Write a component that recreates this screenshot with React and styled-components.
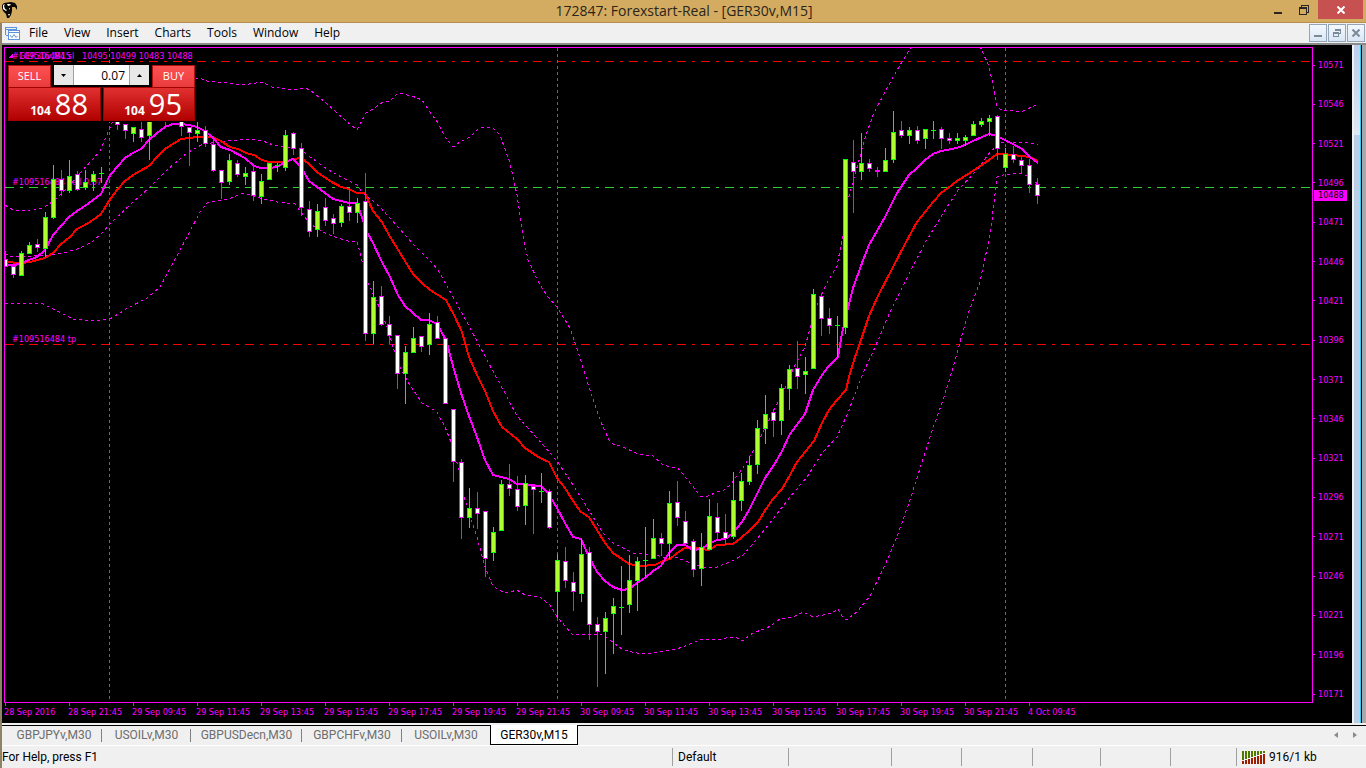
import React, { useState } from 'react';
import styled, { createGlobalStyle } from 'styled-components';

const MAGENTA = '#ff00ff';

// [x, body top, body bottom, high, low, rising]
const candles = [
  [5, 259, 267, 251, 267, 0], [13, 266, 275, 266, 278, 0], [21, 253, 276, 251, 276, 1], [29, 245, 254, 242, 254, 1],
  [37, 244, 248, 239, 252, 0], [45, 217, 249, 212, 257, 1], [53, 179, 218, 165, 219, 1], [61, 179, 191, 170, 196, 0],
  [69, 176, 191, 160, 193, 1], [77, 174, 190, 171, 191, 0], [85, 182, 188, 170, 190, 1], [93, 174, 182, 171, 191, 1],
  [101, 173, 174, 167, 183, 1], [117, 115, 125, 110, 130, 0], [125, 124, 131, 124, 139, 0], [133, 127, 134, 127, 142, 1],
  [141, 129, 138, 120, 142, 0], [149, 110, 136, 110, 160, 1], [165, 112, 121, 110, 127, 0], [181, 120, 127, 115, 136, 0],
  [189, 127, 133, 127, 166, 0], [197, 130, 134, 122, 142, 1], [205, 130, 144, 126, 147, 0], [213, 144, 171, 136, 172, 0],
  [221, 170, 183, 170, 199, 0], [229, 160, 182, 154, 185, 1], [237, 163, 175, 160, 177, 0], [245, 173, 177, 167, 185, 1],
  [253, 171, 196, 165, 201, 0], [261, 181, 197, 174, 204, 1], [269, 163, 180, 163, 180, 1], [277, 165, 166, 163, 172, 1],
  [285, 135, 168, 130, 171, 1], [293, 133, 149, 132, 155, 0], [301, 148, 208, 143, 216, 0], [309, 209, 232, 201, 237, 0],
  [317, 211, 230, 204, 237, 1], [325, 207, 221, 198, 226, 0], [333, 218, 224, 214, 234, 0], [341, 206, 223, 204, 227, 1],
  [349, 206, 213, 189, 221, 0], [357, 203, 213, 198, 223, 1], [365, 201, 334, 173, 341, 0], [373, 297, 334, 281, 344, 1],
  [381, 296, 325, 286, 326, 0], [389, 324, 336, 316, 344, 0], [397, 335, 374, 335, 389, 0], [405, 352, 374, 346, 404, 1],
  [413, 338, 353, 327, 353, 1], [421, 336, 347, 336, 352, 0], [429, 324, 345, 313, 355, 1], [437, 322, 339, 316, 339, 0],
  [445, 338, 404, 338, 404, 0], [453, 409, 462, 409, 482, 0], [461, 462, 518, 459, 539, 0], [469, 508, 518, 488, 528, 1],
  [477, 508, 514, 492, 529, 0], [485, 511, 559, 511, 577, 0], [493, 532, 553, 527, 561, 1], [501, 484, 531, 480, 531, 1],
  [509, 484, 489, 464, 496, 0], [517, 489, 507, 476, 511, 0], [525, 483, 506, 475, 525, 1], [533, 486, 490, 486, 534, 0],
  [541, 491, 492, 473, 503, 1], [549, 491, 528, 489, 529, 0], [557, 560, 592, 554, 618, 1], [565, 561, 581, 547, 588, 0],
  [573, 582, 592, 572, 611, 0], [581, 554, 594, 539, 602, 1], [589, 552, 625, 547, 640, 0], [597, 624, 632, 617, 687, 0],
  [605, 618, 632, 612, 674, 1], [613, 606, 614, 598, 654, 1], [621, 607, 608, 566, 635, 1], [629, 580, 605, 555, 613, 1],
  [637, 561, 581, 557, 611, 1], [645, 560, 561, 527, 577, 1], [653, 538, 559, 519, 559, 1], [661, 538, 544, 533, 556, 0],
  [669, 503, 544, 491, 559, 1], [677, 502, 518, 481, 526, 0], [685, 521, 544, 511, 544, 0], [693, 541, 570, 539, 577, 0],
  [701, 547, 569, 533, 586, 1], [709, 516, 550, 499, 550, 1], [717, 517, 533, 503, 540, 0], [725, 532, 539, 514, 545, 0],
  [733, 500, 537, 472, 539, 1], [741, 481, 501, 473, 511, 1], [749, 465, 482, 456, 485, 1], [757, 428, 465, 420, 474, 1],
  [765, 414, 429, 395, 444, 1], [773, 412, 421, 409, 437, 0], [781, 388, 421, 384, 435, 1], [789, 369, 389, 365, 410, 1],
  [797, 368, 377, 341, 389, 0], [805, 371, 375, 357, 394, 1], [813, 294, 369, 289, 369, 1], [821, 296, 319, 293, 336, 0],
  [829, 318, 326, 308, 334, 0], [837, 325, 326, 316, 357, 1], [845, 159, 328, 159, 334, 1], [853, 162, 172, 140, 213, 0],
  [861, 163, 172, 133, 180, 1], [869, 163, 169, 159, 172, 0], [877, 170, 172, 167, 177, 0], [885, 160, 172, 148, 172, 1],
  [893, 132, 160, 111, 163, 1], [901, 130, 136, 121, 138, 0], [909, 130, 136, 127, 144, 1], [917, 130, 141, 126, 144, 0],
  [925, 129, 139, 129, 149, 1], [933, 130, 131, 121, 139, 1], [941, 129, 139, 127, 149, 0], [949, 138, 141, 133, 144, 0],
  [957, 138, 141, 133, 144, 1], [965, 137, 141, 135, 146, 1], [973, 124, 136, 121, 136, 1], [981, 121, 125, 118, 127, 1],
  [989, 118, 122, 115, 136, 1], [997, 116, 149, 115, 160, 0], [1005, 154, 168, 148, 172, 1], [1013, 154, 160, 146, 163, 0],
  [1021, 160, 166, 157, 174, 0], [1029, 165, 185, 159, 193, 0], [1037, 184, 196, 178, 204, 0],
];

const fastMa = '5,263 8,265 15,265 21,263 37,257 45,250 53,235 61,226 69,217 77,211 85,206 93,200 101,194 109,177 117,167 125,158 133,153 141,149 149,140 157,133 165,127 173,124 181,124 189,125 197,127 205,131 213,138 221,147 230,150 245,158 254,166 261,168 269,168 277,167 285,162 293,159 301,167 309,181 317,187 325,193 333,199 349,203 357,203 360,212 367,232 373,243 381,260 390,277 398,295 405,306 413,313 421,320 429,320 437,324 446,340 453,366 461,393 469,416 477,437 485,460 493,475 509,479 517,484 541,486 548,493 557,508 565,523 573,537 581,539 589,557 597,572 605,581 613,587 622,590 629,589 637,583 645,578 653,571 661,566 669,553 677,545 685,545 693,550 701,549 709,544 717,540 725,539 733,533 742,522 749,510 757,494 765,478 774,465 782,451 790,434 805,414 813,390 822,375 828,367 838,357 842,333 848,308 853,288 862,263 869,245 885,217 897,193 909,175 917,168 925,160 933,154 941,151 957,148 965,145 973,141 982,137 989,134 997,136 1013,144 1022,149 1030,157 1038,163';
const slowMa = '5,262 21,263 30,262 45,258 53,253 61,244 70,237 77,229 85,225 93,220 101,214 109,201 117,190 125,181 133,175 149,166 157,157 165,149 181,139 197,137 213,137 221,141 230,147 238,149 246,153 254,155 262,160 269,162 285,162 293,159 301,158 309,164 317,172 330,181 341,187 349,189 357,193 365,193 373,211 382,222 389,235 397,248 405,261 413,274 422,283 430,290 446,300 454,315 462,332 469,357 477,375 485,391 493,411 502,427 517,439 525,448 540,458 549,462 557,478 565,488 573,501 581,512 589,517 597,530 605,543 613,553 622,559 629,564 640,566 655,565 663,561 670,559 677,553 685,548 693,547 701,549 709,550 717,545 733,544 741,538 749,531 758,522 766,509 773,499 782,489 790,475 797,462 814,441 822,423 829,410 837,400 846,390 849,377 854,360 862,337 869,316 877,298 893,267 905,244 917,222 925,212 933,202 941,193 948,188 957,181 973,171 989,160 997,154 1003,154 1013,155 1030,157 1038,161';
const bands = [
  '5,205 13,210 30,210 43,208 55,200 67,188 82,171 100,151 106,137 112,123 125,95 140,80 200,78 207,81 227,83 243,85 262,82 272,87 292,90 305,88 310,90 325,102 338,114 357,130 366,113 373,109 383,102 390,101 398,93 412,96 422,100 430,112 438,123 445,137 453,147 460,142 470,137 480,127 493,128 500,135 510,163 517,195 523,235 528,260 540,285 548,297 557,307 570,328 580,358 590,390 600,420 609,440 613,444 623,447 638,454 653,456 662,464 670,467 677,467 687,479 695,489 700,496 708,496 717,492 724,490 730,485 743,468 755,448 760,438 773,412 785,388 795,365 805,347 811,325 816,307 827,283 837,266 842,240 848,200 852,185 860,157 865,138 873,115 887,88 900,65 912,46',
  '980,46 982,51 989,66 993,85 997,107 1002,110 1013,111 1023,111 1038,104',
  '5,254 13,257 50,255 67,252 80,248 92,242 103,232 112,222 133,202 150,187 167,170 187,153 203,144 227,141 247,139 263,141 273,145 293,148 302,151 327,169 343,178 357,185 363,193 380,207 397,226 413,244 430,261 438,270 452,295 470,328 487,360 507,397 517,416 537,438 557,461 573,485 590,512 603,533 613,543 633,553 655,555 663,557 678,558 690,563 703,567 717,567 730,562 743,555 757,539 773,519 790,497 807,477 822,453 837,437 847,415 863,373 873,352 890,312 910,272 925,243 942,215 958,190 977,170 990,152 1000,143 1007,142 1025,142 1038,145',
  '5,303 43,304 57,311 73,319 90,321 110,319 128,308 147,298 160,287 173,263 187,237 200,212 207,203 228,199 244,193 260,198 277,202 295,204 303,215 312,225 323,232 337,238 348,241 357,241 360,253 365,272 368,283 377,302 387,327 393,347 400,367 408,382 422,403 437,412 445,427 451,442 457,463 465,500 477,537 485,567 493,586 503,592 510,592 517,590 525,595 540,597 550,605 558,618 573,635 580,634 588,635 600,634 610,640 623,650 637,653 653,653 670,650 677,649 690,644 702,639 718,640 730,637 737,638 742,641 753,633 767,628 780,619 793,617 803,612 813,617 823,615 832,613 838,609 842,616 846,620 857,612 870,596 885,565 897,537 910,500 923,459 933,428 942,403 953,368 960,342 969,311 980,282 988,244 992,220 997,177 1003,175 1022,173 1027,176 1038,184',
];
const sessions = [109, 557, 1005];
const orderLines = [
  { y: 61, color: '#ff0000' },
  { y: 187, color: '#32cd32' },
  { y: 344, color: '#ff0000' },
];

const prices = Array.from({ length: 17 }, (_, i) => 10571 - i * 25);
const times = [
  '28 Sep 2016', '28 Sep 21:45', '29 Sep 09:45', '29 Sep 11:45', '29 Sep 13:45', '29 Sep 15:45',
  '29 Sep 17:45', '29 Sep 19:45', '29 Sep 21:45', '30 Sep 09:45', '30 Sep 11:45', '30 Sep 13:45',
  '30 Sep 15:45', '30 Sep 17:45', '30 Sep 19:45', '30 Sep 21:45', '4 Oct 09:45',
];
const menus = ['File', 'View', 'Insert', 'Charts', 'Tools', 'Window', 'Help'];
const tabs = [
  { label: 'GBPJPYv,M30', width: 96 },
  { label: 'USOILv,M30', width: 89 },
  { label: 'GBPUSDecn,M30', width: 111 },
  { label: 'GBPCHFv,M30', width: 100 },
  { label: 'USOILv,M30', width: 88 },
  { label: 'GER30v,M15', width: 88 },
];
const statusCells = [116, 103, 70, 71, 68, 70, 66];

function Candle({ data }) {
  const [x, top, bottom, high, low, up] = data;
  const line = up ? '#00ff00' : MAGENTA;
  return (
    <g>
      <rect x={x} y={high} width="1" height={low - high} fill={line} />
      <rect x={x - 2} y={top} width="5" height={bottom - top} fill={line} />
      {bottom - top > 2 && (
        <rect x={x - 1} y={top + 1} width="3" height={bottom - top - 2} fill={up ? '#adff2f' : '#ffffff'} />
      )}
    </g>
  );
}

function Plot() {
  return (
    <PlotSvg shapeRendering="crispEdges" aria-label="GER30v M15 candlestick chart">
      {orderLines.map((l) => (
        <line key={l.y} x1="0" x2="100%" y1={l.y - 47.5} y2={l.y - 47.5} stroke={l.color} strokeDasharray="9 6 3 6" />
      ))}
      <g transform="translate(-5 -48)">
        {sessions.map((x) => (
          <line key={x} x1={x + 0.5} x2={x + 0.5} y1="48" y2="702" stroke={MAGENTA} strokeDasharray="3 3" />
        ))}
        <path d="M8 58 L13 53 L13 58 Z" fill={MAGENTA} />
        <text x="12" y="59">#109516484 sl</text>
        <text x="19" y="59">GER30v,M15</text>
        <text x="82" y="59">10495 10499 10483 10488</text>
        <text x="12" y="185">#109516484 sell 0.07</text>
        <text x="12" y="342">#109516484 tp</text>
        {bands.map((b) => (
          <polyline key={b} points={b} fill="none" stroke={MAGENTA} strokeDasharray="3 3" />
        ))}
        <polyline points={slowMa} fill="none" stroke="#ff0000" strokeWidth="2" />
        <polyline points={fastMa} fill="none" stroke={MAGENTA} strokeWidth="2" />
        {candles.map((c) => <Candle key={c[0]} data={c} />)}
      </g>
    </PlotSvg>
  );
}

function BullLogo() {
  return (
    <svg width="16" height="17" viewBox="0 0 16 17">
      <path d="M0 3 L2 1 L9 0 L13 1 L15 4 L15 8 L13 5 L10 5 L10 9 L9 13 L7 16 L5 16 L4 12 L1 9 L0 6 Z" fill="#0a0805" />
      <path d="M1 3 L3 2 L2 4 L3 7 L5 8 L4 9 L1 7 Z M5 2 L8 2 L9 3 L6 4 Z M7 6 L8 6 L7 8 Z M6 12 L8 12 L7 14 Z" fill="#fff" />
    </svg>
  );
}

function ChartFileIcon() {
  return (
    <svg width="15" height="15" viewBox="0 0 15 15" fill="none" stroke="#5b94dc" shapeRendering="crispEdges">
      <path d="M0.5 9 V1.5 H11.5 V4 M0.5 3.5 H11 M0.5 9.5 H3" />
      <rect x="3.5" y="4.5" width="11" height="9" fill="#fff" />
      <path d="M4 6.5 H14" />
      <path d="M5 9 L7 11.5 L9 8.5 L11 11.5 L12.5 10" shapeRendering="auto" />
    </svg>
  );
}

function TrafficIcon() {
  return (
    <svg width="23" height="13" shapeRendering="crispEdges">
      {[3, 4, 5, 6, 7, 8, 9, 10].map((h, i) => (
        <g key={h}>
          <rect x={i * 3} y="0" width="2" height={12 - h} fill="#4f7a00" />
          <rect x={i * 3} y={13 - h} width="2" height={h} fill="#a01c00" />
        </g>
      ))}
    </svg>
  );
}

function RestoreIcon({ color }) {
  return (
    <svg width="10" height="10" viewBox="0 0 10 10" fill="none" stroke={color} shapeRendering="crispEdges">
      <path d="M2.5 2 V0.5 H9.5 V7.5 H8" />
      <rect x="0.5" y="2.5" width="7" height="7" />
      <path d="M0 3.5 H8" />
    </svg>
  );
}

function SmallRestoreIcon({ color }) {
  return (
    <svg width="8" height="8" viewBox="0 0 8 8" fill="none" stroke={color} shapeRendering="crispEdges">
      <path d="M2.5 2 V0.5 H7.5 V4.5 H6 M2 1.5 H8" />
      <rect x="0.5" y="3.5" width="5" height="4" />
      <path d="M0 4.5 H6" />
    </svg>
  );
}

function CrossIcon({ color }) {
  return (
    <svg width="8" height="8" viewBox="0 0 8 8" stroke={color} strokeWidth="2">
      <path d="M0.5 0.5 L7.5 7.5 M7.5 0.5 L0.5 7.5" />
    </svg>
  );
}

function TradePanel() {
  const [volume, setVolume] = useState('0.07');
  const step = (d) => setVolume((Number(volume) + d).toFixed(2));
  return (
    <Panel>
      <Quote>
        <QuoteHead>SELL</QuoteHead>
        <QuoteBody><small>104</small>88</QuoteBody>
      </Quote>
      <Quote $right>
        <QuoteHead>BUY</QuoteHead>
        <QuoteBody><small>104</small>95</QuoteBody>
      </Quote>
      <Spinner>
        <button type="button" aria-label="Decrease volume" onClick={() => step(-0.01)}>
          <svg width="5" height="3"><path d="M0 0 H5 L2.5 3 Z" /></svg>
        </button>
        <input aria-label="Volume" value={volume} onChange={(e) => setVolume(e.target.value)} />
        <button type="button" aria-label="Increase volume" onClick={() => step(0.01)}>
          <svg width="5" height="3"><path d="M0 3 H5 L2.5 0 Z" /></svg>
        </button>
      </Spinner>
    </Panel>
  );
}

function App() {
  const [active, setActive] = useState(5);
  return (
    <Window>
      <GlobalStyle />
      <TitleBar>
        <BullLogo />
        <Title>172847: Forexstart-Real - [GER30v,M15]</Title>
        <WindowButtons>
          <TitleButton aria-label="Minimize"><Dash $color="#2b2620" /></TitleButton>
          <TitleButton aria-label="Restore"><RestoreIcon color="#2b2620" /></TitleButton>
          <CloseButton aria-label="Close"><CrossIcon color="#fff" /></CloseButton>
        </WindowButtons>
      </TitleBar>
      <Body>
        <MenuBar>
          <ChartFileIcon />
          <Menus>
            {menus.map((m) => <MenuItem key={m}>{m}</MenuItem>)}
          </Menus>
          <MdiButton aria-label="Minimize chart"><Dash $color="#7b8a99" /></MdiButton>
          <MdiButton aria-label="Restore chart"><SmallRestoreIcon color="#7b8a99" /></MdiButton>
          <MdiButton aria-label="Close chart"><CrossIcon color="#7b8a99" /></MdiButton>
        </MenuBar>
        <Workspace>
          <Chart>
            <PlotArea>
              <Plot />
              <TradePanel />
            </PlotArea>
            <PriceAxis>
              {prices.map((p) => <Price key={p}>{p}</Price>)}
              <LastPrice>10488</LastPrice>
            </PriceAxis>
            <TimeAxis>
              {times.map((t) => <Time key={t}>{t}</Time>)}
            </TimeAxis>
          </Chart>
          <Frame />
          <Edge />
        </Workspace>
        <TabBar>
          {tabs.map((t, i) => (
            <Tab key={i} $width={t.width} $active={i === active} $last={i + 1 === active} onClick={() => setActive(i)}>
              {t.label}
            </Tab>
          ))}
          <Arrows>
            <button type="button" aria-label="Scroll tabs left"><svg width="4" height="6"><path d="M4 0 V6 L0 3 Z" /></svg></button>
            <button type="button" aria-label="Scroll tabs right"><svg width="4" height="6"><path d="M0 0 V6 L4 3 Z" /></svg></button>
          </Arrows>
        </TabBar>
        <StatusBar>
          <StatusText>For Help, press F1</StatusText>
          {statusCells.map((w, i) => <StatusCell key={i} $width={w}>{i === 0 && 'Default'}</StatusCell>)}
          <StatusCell $width={130}><TrafficIcon />916/1 kb</StatusCell>
        </StatusBar>
      </Body>
    </Window>
  );
}

const GlobalStyle = createGlobalStyle`
  * {
    box-sizing: border-box;
  }
  body {
    margin: 0;
    font-family: 'Open Sans', 'Noto Sans', sans-serif;
    font-size: 12px;
    color: #000;
  }
  button, input {
    font: inherit;
    color: inherit;
    margin: 0;
    padding: 0;
    border: none;
    background: none;
  }
`;

const Window = styled.div`
  min-height: 100vh;
  display: flex;
  flex-direction: column;
  overflow: hidden;
  background: #f0f0f0;
`;

const TitleBar = styled.header`
  height: 23px;
  display: grid;
  grid-template-columns: 1fr auto 1fr;
  align-items: center;
  padding-left: 2px;
  background: #d3ac62;
  border-bottom: 1px solid #b58f50;
  > svg {
    align-self: start;
    margin-top: 2px;
  }
`;

const Title = styled.h1`
  margin: 0;
  font-size: 14px;
  font-weight: 400;
  line-height: 22px;
  color: #2b2419;
`;

const WindowButtons = styled.div`
  display: flex;
  justify-content: flex-end;
  align-self: start;
  padding-right: 3px;
`;

const TitleButton = styled.button`
  width: 26px;
  height: 19px;
  display: flex;
  align-items: center;
  justify-content: center;
`;

const CloseButton = styled(TitleButton)`
  width: 45px;
  margin-left: 1px;
  background: #c75050;
`;

const Dash = styled.span`
  width: 8px;
  height: 2px;
  margin-top: 6px;
  background: ${(p) => p.$color};
`;

const Body = styled.div`
  flex: 1;
  display: flex;
  flex-direction: column;
  border-left: 2px solid #8f8266;
`;

const MenuBar = styled.nav`
  height: 20px;
  display: flex;
  align-items: center;
  gap: 1px;
  padding: 0 1px 0 3px;
`;

const Menus = styled.div`
  flex: 1;
  display: flex;
`;

const MenuItem = styled.button`
  padding: 0 8px;
  line-height: 20px;
`;

const MdiButton = styled.button`
  width: 18px;
  height: 18px;
  display: flex;
  align-items: center;
  justify-content: center;
  border: 1px solid #94a5b8;
  background: linear-gradient(#f4f8fd, #d9e6f5);
`;

const Workspace = styled.main`
  flex: 1;
  display: flex;
  border-top: 2px solid #8a8a8a;
`;

const Chart = styled.section`
  flex: 1;
  min-width: 0;
  display: grid;
  grid-template-columns: minmax(0, 1fr) 39px;
  grid-template-rows: minmax(0, 1fr) 20px;
  padding: 2px 0 0 2px;
  background: #000;
  color: ${MAGENTA};
  font-family: 'DejaVu Sans Condensed', 'Open Sans', sans-serif;
  font-size: 9px;
`;

const PlotArea = styled.div`
  position: relative;
  border: 1px solid ${MAGENTA};
`;

const PlotSvg = styled.svg`
  display: block;
  width: 100%;
  height: 100%;
  text {
    fill: ${MAGENTA};
    font-size: 9px;
  }
`;

const PriceAxis = styled.div`
  position: relative;
  display: flex;
  flex-direction: column;
  justify-content: space-between;
  padding: 12px 0 3px;
`;

const Price = styled.span`
  display: flex;
  align-items: center;
  gap: 3px;
  line-height: 12px;
  &::before {
    content: '';
    width: 2px;
    height: 1px;
    background: ${MAGENTA};
  }
`;

const LastPrice = styled.strong`
  position: absolute;
  top: 143px;
  left: 1px;
  width: 33px;
  padding-left: 4px;
  font-weight: 400;
  line-height: 11px;
  color: #000;
  background: ${MAGENTA};
`;

const TimeAxis = styled.div`
  grid-column: 1 / -1;
  display: flex;
  overflow: hidden;
`;

const Time = styled.span`
  flex: 0 0 64px;
  line-height: 12px;
  white-space: nowrap;
  &::before {
    content: '';
    display: block;
    width: 1px;
    height: 3px;
    margin-left: 1px;
    background: ${MAGENTA};
  }
`;

const Frame = styled.div`
  width: 9px;
  border: solid;
  border-width: 0 1px 0 2px;
  border-color: #f0f0f0 #2fcdf5;
  border-left-color: #f0f0f0;
  background: linear-gradient(#b9cfec, #dde8f5 90px, #b8cfe8 90px);
`;

const Edge = styled.div`
  width: 5px;
  border-left: 1px solid #000;
  background: #a8a8a8;
`;

const Panel = styled.div`
  position: absolute;
  top: 16px;
  left: 2px;
  display: flex;
  gap: 2px;
  padding: 1px;
  background: #000;
  color: #fff;
  font-family: 'Open Sans', 'Noto Sans', sans-serif;
`;

const Quote = styled.button`
  width: ${(p) => (p.$right ? 92 : 93)}px;
  display: flex;
  flex-direction: column;
  align-items: ${(p) => (p.$right ? 'flex-end' : 'flex-start')};
`;

const QuoteHead = styled.span`
  width: 43px;
  height: 22px;
  border: 1px solid #b01010;
  border-bottom: none;
  font-size: 11px;
  line-height: 20px;
  background: linear-gradient(#ff5050, #e83c3c);
`;

const QuoteBody = styled.span`
  width: 100%;
  height: 34px;
  display: flex;
  align-items: baseline;
  justify-content: flex-end;
  gap: 4px;
  padding-right: 12px;
  border: 1px solid #a00000;
  font-size: 29px;
  line-height: 32px;
  background: linear-gradient(#e03030, #b00000);
  small {
    font-size: 12px;
    font-weight: 700;
  }
`;

const Spinner = styled.div`
  position: absolute;
  top: 1px;
  left: 47px;
  height: 20px;
  display: flex;
  color: #000;
  button {
    width: 19px;
    background: #e8e8e8;
  }
  svg {
    display: block;
    margin: 0 auto;
  }
  input {
    width: 57px;
    padding-right: 4px;
    border: solid #a0a0a0;
    border-width: 0 1px;
    text-align: right;
    font-size: 12px;
    background: #fff;
  }
`;

const TabBar = styled.div`
  height: 23px;
  display: flex;
  padding-left: 4px;
  font-family: Roboto, 'Open Sans', sans-serif;
  border-top: 2px solid #f0f0f0;
  border-bottom: 1px solid #fff;
  box-shadow: inset 0 1px 0 #000;
`;

const Tab = styled.button`
  width: ${(p) => p.$width}px;
  height: ${(p) => (p.$active ? '20px' : '19px')};
  line-height: 18px;
  color: ${(p) => (p.$active ? '#000' : '#6d6d6d')};
  background: ${(p) => (p.$active ? '#fff' : 'none')};
  border: ${(p) => (p.$active ? '1px solid #000' : 'none')};
  border-top: none;
  ${(p) => !p.$active && !p.$last && `
    background: linear-gradient(#808080, #808080) right 0 top 4px / 1px 13px no-repeat;
  `}
`;

const Arrows = styled.div`
  display: flex;
  gap: 15px;
  margin-left: auto;
  padding-right: 9px;
  fill: #8a8a8a;
  svg {
    display: block;
  }
`;

const StatusBar = styled.footer`
  height: 22px;
  display: flex;
  align-items: center;
  font-family: Roboto, 'Open Sans', sans-serif;
`;

const StatusText = styled.span`
  flex: 1;
  white-space: nowrap;
`;

const StatusCell = styled.span`
  width: ${(p) => p.$width}px;
  height: 18px;
  display: flex;
  align-items: center;
  gap: 4px;
  padding-left: 5px;
  border-left: 1px solid #a0a0a0;
`;

export default App;
